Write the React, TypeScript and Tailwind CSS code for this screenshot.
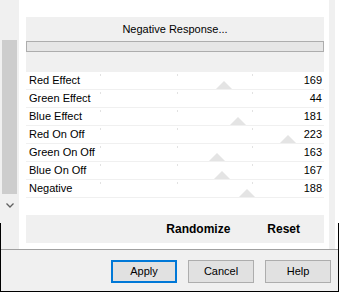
import React from "react";

const rows = [
  { label: "Red Effect", value: 169 },
  { label: "Green Effect", value: 44 },
  { label: "Blue Effect", value: 181 },
  { label: "Red On Off", value: 223 },
  { label: "Green On Off", value: 163 },
  { label: "Blue On Off", value: 167 },
  { label: "Negative", value: 188 },
];

const ticks = [74, 151, 226];

const SliderRow = ({ label, value }: { label: string; value: number }) => {
  const center = -2 + (value * 302) / 255;
  return (
    <div className="relative h-[18px] border-b border-[#f0f0f0]">
      {ticks.map((t) => (
        <div key={t} className="absolute top-[2px] w-px h-[2px] bg-[#e2e2e2]" style={{ left: t }} />
      ))}
      <svg
        className="absolute top-[8px]"
        style={{ left: center - 8 }}
        width="16"
        height="9"
        viewBox="0 0 16 9"
      >
        <polygon points="0,9 8,1 16,9" fill="#e4e4e4" />
      </svg>
      <div className="relative flex items-center justify-between h-[17px] pl-[3px] pr-[2px] leading-[17px]">
        <span className="bg-white pr-[2px]">{label}</span>
        <span className="bg-white pl-[2px]">{value}</span>
      </div>
    </div>
  );
};

export default function App() {
  return (
    <div className="relative w-[339px] h-[292px] bg-white overflow-hidden text-[11px] text-black [font-family:'Liberation_Sans',Arial,sans-serif]">
      <div className="flex h-[249px]">
        {/* vertical scrollbar */}
        <div className="relative w-[20px] bg-[#f0f0f0] border-r border-white flex flex-col items-center">
          <div className="mt-[40px] w-[15px] h-[154px] bg-[#cdcdcd]" />
          <svg className="mt-[9px]" width="8" height="5" viewBox="0 0 8 5">
            <polyline points="0.5,0.5 4,4 7.5,0.5" fill="none" stroke="#606060" strokeWidth="1.3" />
          </svg>
        </div>

        {/* content */}
        <div className="flex-1 pl-[6px] pr-[5px] pt-[17px]">
          <div className="bg-[#f0f0f0] h-[55px] pt-[6px] flex flex-col">
            <div className="text-center leading-[13px]">Negative Response...</div>
            <div className="mt-[5px] h-[11px] border border-[#adadad] bg-[#e6e6e6]" />
          </div>
          {rows.map((r) => (
            <SliderRow key={r.label} label={r.label} value={r.value} />
          ))}
          <div className="mt-[17px] h-[28px] bg-[#f0f0f0] flex items-center justify-end gap-[37px] pr-[24px] font-bold text-[12px]">
            <span>Randomize</span>
            <span>Reset</span>
          </div>
        </div>

        {/* right edge */}
        <div className="w-[6px] bg-[#f0f0f0]" />
        <div className="w-[4px] bg-white" />
      </div>

      {/* dialog button bar */}
      <div className="h-[43px] border-t border-[#a0a0a0] border-b border-b-black bg-[#f0f0f0] flex items-start justify-end gap-[11px] pt-[10px] pr-[8px]">
        <button className="w-[66px] h-[23px] border-2 border-[#0078d7] bg-[#e1e1e1] text-[11px]">Apply</button>
        <button className="w-[66px] h-[23px] border border-[#adadad] bg-[#e1e1e1] text-[11px]">Cancel</button>
        <button className="w-[66px] h-[23px] border border-[#adadad] bg-[#e1e1e1] text-[11px]">Help</button>
      </div>

      {/* window frame edges */}
      <div className="absolute left-0 top-[223px] bottom-0 w-px bg-black" />
      <div className="absolute right-0 top-[223px] bottom-0 w-px bg-black" />
    </div>
  );
}
